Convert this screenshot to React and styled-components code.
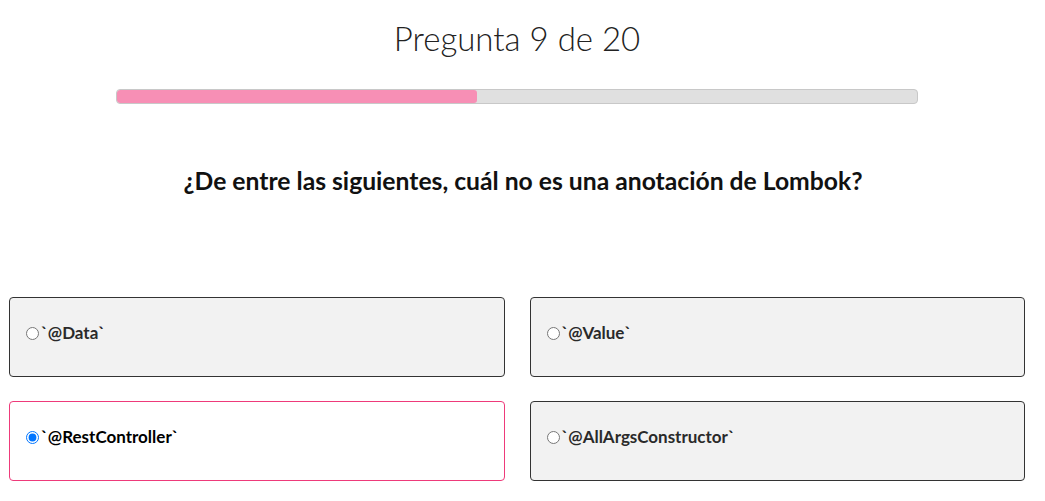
import React, { useState } from "react";
import styled, { createGlobalStyle } from "styled-components";

const Global = createGlobalStyle`
  html, body { margin: 0; padding: 0; background: #fff; }
  body { font-family: Lato, "Open Sans", sans-serif; color: #222; }
`;

const Page = styled.main`
  width: 1016px;
  padding: 0 20px 0 9px;
  display: flex;
  flex-direction: column;
`;

const Title = styled.h1`
  margin: 16px 0 0;
  font-weight: 300;
  font-size: 33px;
  line-height: 44px;
  text-align: center;
  color: #222;
`;

const Track = styled.div`
  width: 800px;
  height: 13px;
  margin: 29px auto 0;
  background: #e0e0e0;
  border: 1px solid #c8c8c8;
  border-radius: 4px;
  overflow: hidden;
`;

const Fill = styled.div`
  height: 100%;
  background: #f78fb5;
  border-radius: 3px;
`;

const Question = styled.h2`
  margin: 62px 0 0;
  padding-left: 12px;
  font-weight: 700;
  font-size: 24.7px;
  line-height: 30px;
  text-align: center;
  color: #111;
`;

const Grid = styled.div`
  margin-top: 101px;
  display: grid;
  grid-template-columns: 1fr 1fr;
  column-gap: 25px;
  row-gap: 24px;
`;

const Option = styled.label`
  box-sizing: border-box;
  height: 80px;
  padding: 25px 16px 0;
  display: flex;
  align-items: flex-start;
  border: 1px solid ${(p) => (p.$selected ? "#ee3a7a" : "#333")};
  border-radius: 4px;
  background: ${(p) => (p.$selected ? "#fff" : "#f2f2f2")};
  cursor: pointer;
`;

const Radio = styled.input`
  margin: 4px 2px 0 0;
  width: 13px;
  height: 13px;
`;

const OptionText = styled.span`
  font-weight: 700;
  font-size: 17px;
  line-height: 20px;
  color: ${(p) => (p.$selected ? "#000" : "#2a2a2a")};
`;

const options = ["`@Data`", "`@Value`", "`@RestController`", "`@AllArgsConstructor`"];

export default function App() {
  const [sel, setSel] = useState(2);
  const current = 9;
  const total = 20;
  return (
    <>
      <Global />
      <Page>
        <Title>Pregunta {current} de {total}</Title>
        <Track>
          <Fill style={{ width: `${(current / total) * 100}%` }} />
        </Track>
        <Question>¿De entre las siguientes, cuál no es una anotación de Lombok?</Question>
        <Grid>
          {options.map((o, i) => (
            <Option key={o} $selected={sel === i}>
              <Radio type="radio" name="q" checked={sel === i} onChange={() => setSel(i)} />
              <OptionText $selected={sel === i}>{o}</OptionText>
            </Option>
          ))}
        </Grid>
      </Page>
    </>
  );
}
